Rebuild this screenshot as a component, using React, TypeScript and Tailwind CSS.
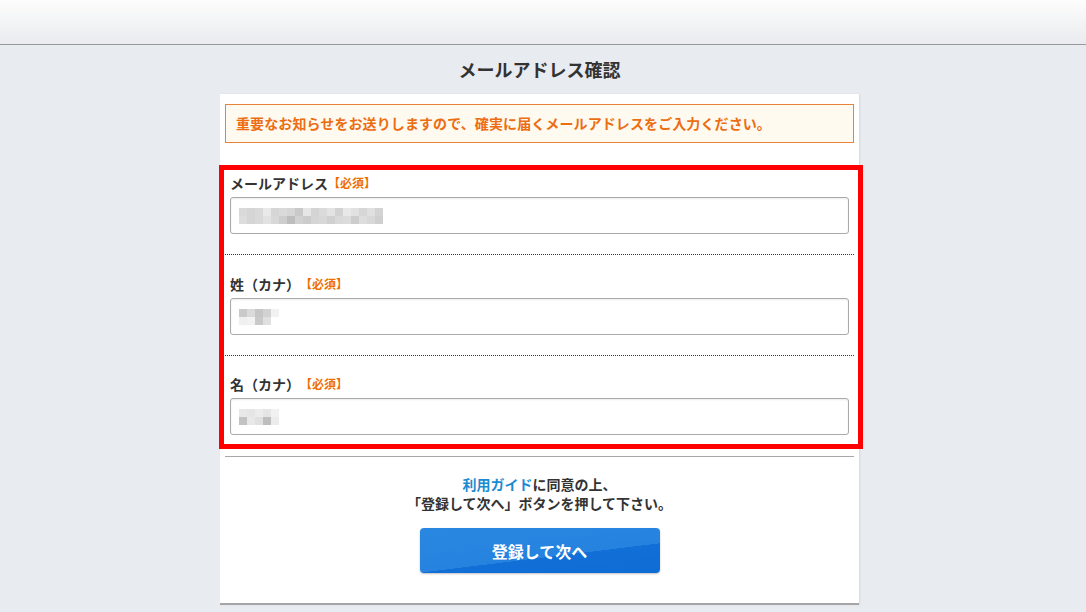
import React from "react";

const emailRows: string[][] = [
  ["bg-[#d9d9d9]","bg-[#d5d5d5]","bg-[#d9d9d9]","bg-[#e9e9e9]","bg-[#d6d6d6]","bg-[#dadada]","bg-[#d6d6d6]","bg-[#c9c9c9]","bg-[#e6e6e6]","bg-[#d4d4d4]","bg-[#dbdbdb]","bg-[#e3e3e3]","bg-[#d2d2d2]","bg-[#e8e8e8]","bg-[#e1e1e1]","bg-[#d6d6d6]","bg-[#e0e0e0]","bg-[#d3d3d3]"],
  ["bg-[#dddddd]","bg-[#d5d5d5]","bg-[#d9d9d9]","bg-[#e2e2e2]","bg-[#d8d8d8]","bg-[#cdcdcd]","bg-[#bdbdbd]","bg-[#d1d1d1]","bg-[#cccccc]","bg-[#d5d5d5]","bg-[#d8d8d8]","bg-[#d0d0d0]","bg-[#d9d9d9]","bg-[#dcdcdc]","bg-[#cdcdcd]","bg-[#dddddd]","bg-[#d8d8d8]","bg-[#cfcfcf]"],
];
const seiRows: string[][] = [
  ["bg-[#cacaca]","bg-[#dadada]","bg-[#c6c6c6]","bg-[#d2d2d2]","bg-[#f2f2f2]"],
  ["bg-[#f0f0f0]","bg-[#f2f2f2]","bg-[#c9c9c9]","bg-[#e0e0e0]","bg-[#ffffff]"],
];
const meiRows: string[][] = [
  ["bg-[#e8e8e8]","bg-[#e5e5e5]","bg-[#ececec]","bg-[#e5e5e5]","bg-[#f1f1f1]"],
  ["bg-[#c2c2c2]","bg-[#e8e8e8]","bg-[#e0e0e0]","bg-[#bebebe]","bg-[#ececec]"],
];

function Pixels({ rows }: { rows: string[][] }) {
  return (
    <div className="flex flex-col">
      {rows.map((r, i) => (
        <div key={i} className="flex">
          {r.map((c, j) => (
            <div key={j} className={`w-[8px] h-[8px] ${c}`} />
          ))}
        </div>
      ))}
    </div>
  );
}

function Field({
  label,
  rows,
  pt,
  pb,
  last,
}: {
  label: string;
  rows: string[][];
  pt: string;
  pb: string;
  last?: boolean;
}) {
  return (
    <div
      className={`mx-[5px] px-[5px] ${pt} ${pb} ${
        last ? "" : "border-b border-dotted border-[#333]"
      }`}
    >
      <div className="flex items-center h-[16px] text-[14px] font-bold text-[#333] leading-[16px]">
        <span>{label}</span>
        <span className="text-[12px] text-[#ee6f00]">【必須】</span>
      </div>
      <div className="mt-[6px] h-[37px] border border-[#aaaaaa] rounded-[3px] bg-white shadow-[inset_0_1px_2px_rgba(0,0,0,0.08)] flex items-center pl-[8px]">
        <Pixels rows={rows} />
      </div>
    </div>
  );
}

export default function App() {
  return (
    <div
      className="min-h-screen bg-[#e8ebef]"
      style={{ fontFamily: '"Noto Sans CJK JP", "Noto Sans", sans-serif' }}
    >
      <div className="h-[45px] bg-gradient-to-b from-[#fdfdfd] to-[#e9ebee] border-b border-[#9a9a9a]" />
      <div className="w-[639px] ml-[220px]">
        <div className="h-[49px] flex items-center justify-center text-[18px] font-bold text-[#333]">
          メールアドレス確認
        </div>
        <div className="bg-white pt-[10px] pb-[30px] border-b-2 border-[#a5a5a5] shadow-[1px_0_2px_rgba(0,0,0,0.08)]">
          <div className="mx-[5px] h-[39px] border border-[#e8813a] bg-[#fffaef] flex items-center pl-[10px] text-[14px] font-bold text-[#ec6d12] tracking-[0.1px]">
            重要なお知らせをお送りしますので、確実に届くメールアドレスをご入力ください。
          </div>
          <div className="relative mt-[22px]">
            <div className="absolute top-0 bottom-0 -left-[1px] -right-[4px] border-[5px] border-[#ff0000] pointer-events-none" />
            <Field label="メールアドレス" rows={emailRows} pt="pt-[10px]" pb="pb-[20px]" />
            <Field label="姓（カナ）" rows={seiRows} pt="pt-[21px]" pb="pb-[20px]" />
            <Field label="名（カナ）" rows={meiRows} pt="pt-[20px]" pb="pb-[14px]" last />
          </div>
          <div className="mt-[7px] mx-[5px] h-px bg-[#a8a8a8]" />
          <div className="pt-[18px] text-center text-[14px] font-bold text-[#333] leading-[19px]">
            <div>
              <span className="text-[#1b8bd1]">利用ガイド</span>に同意の上、
            </div>
            <div>「登録して次へ」ボタンを押して下さい。</div>
          </div>
          <div className="flex justify-center mt-[15px]">
            <button className="w-[240px] h-[45px] rounded-[4px] bg-[linear-gradient(173deg,#2a87e1_0%,#2582de_60%,#126fd7_60%,#0f6cd5_100%)] text-white text-[16px] font-bold shadow-[0_1px_2px_rgba(0,0,0,0.25)]">
              登録して次へ
            </button>
          </div>
        </div>
      </div>
    </div>
  );
}
